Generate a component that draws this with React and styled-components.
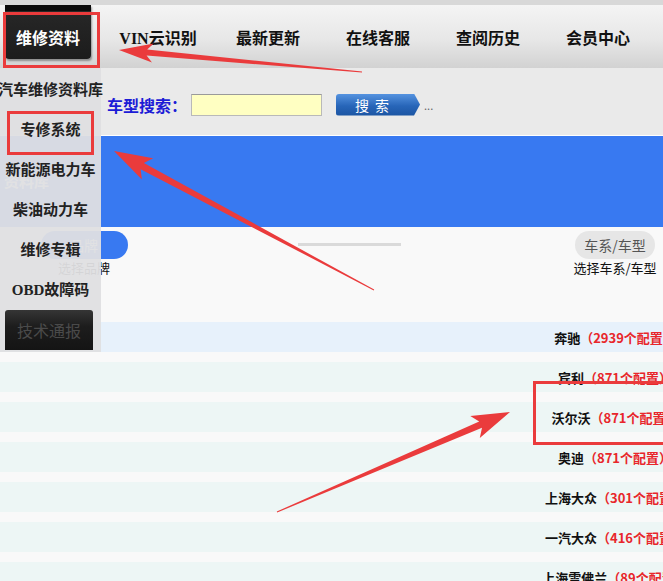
import styled, { createGlobalStyle } from "styled-components";

const GlobalStyle = createGlobalStyle`
  html, body {
    margin: 0;
    padding: 0;
    overflow: hidden;
    background: #fff;
  }
  body {
    font-family: "Noto Sans CJK SC", "Noto Sans", sans-serif;
  }
`;

const Page = styled.div`
  position: relative;
  width: 700px;
  height: 581px;
  overflow: hidden;
  background: #f9f9f9;
`;

const TopNav = styled.div`
  height: 63px;
  border-top: 5px solid #d8d8d8;
  background: linear-gradient(#f4f4f4, #e7e7e7 55%, #d2d2d2);
  display: flex;
  gap: 24px;
  padding-left: 5px;
`;

const NavTab = styled.a`
  width: 86px;
  height: 54px;
  padding-top: 10px;
  box-sizing: border-box;
  display: flex;
  align-items: center;
  justify-content: center;
  white-space: nowrap;
  font-family: "Liberation Serif", "Noto Sans CJK SC", serif;
  font-size: 16px;
  font-weight: 700;
  color: ${({ $active }) => ($active ? "#fff" : "#111")};
  background: ${({ $active }) =>
    $active
      ? "linear-gradient(#0b0b0b 0 6px, #272727 6px, #1c1c1c)"
      : "transparent"};
  border-radius: 0 0 4px 4px;
  box-shadow: ${({ $active }) =>
    $active ? "1px 2px 2px rgba(0,0,0,0.35)" : "none"};
  text-decoration: none;
`;

const SearchRow = styled.div`
  height: 68px;
  box-sizing: border-box;
  padding: 6px 0 0 107px;
  background: #eaeaea;
  border-bottom: 1px solid #fff;
  display: flex;
  align-items: center;
`;

const SearchLabel = styled.span`
  color: #1c1cd6;
  font-size: 16px;
  font-weight: 700;
  white-space: nowrap;
`;

const SearchInput = styled.div`
  width: 131px;
  height: 22px;
  box-sizing: border-box;
  margin-left: 4px;
  background: #ffffc2;
  border: 1px solid #b9b9b9;
  border-top-color: #9a9a9a;
`;

const SearchButton = styled.div`
  width: 84px;
  height: 22px;
  margin-left: 14px;
  display: flex;
  align-items: center;
  justify-content: center;
  padding-right: 6px;
  box-sizing: border-box;
  color: #fff;
  font-size: 14px;
  letter-spacing: 6px;
  background: linear-gradient(#5593e0, #2765b8 55%, #1c55a2);
  border-radius: 3px 0 0 3px;
  clip-path: polygon(0 0, calc(100% - 6px) 0, 100% 50%, calc(100% - 6px) 100%, 0 100%);
`;

const Ellipsis = styled.span`
  margin-left: 4px;
  font-size: 11px;
  color: #666;
`;

const BlueBand = styled.div`
  height: 91px;
  background: #3879f1;
  box-sizing: border-box;
  padding: 32px 0 0 4px;
`;

const BandTitle = styled.span`
  color: #fff;
  font-size: 15px;
  font-weight: 700;
`;

const StepArea = styled.div`
  height: 95px;
  display: grid;
  grid-template-columns: 168px 1fr 170px;
`;

const Step = styled.div`
  display: flex;
  flex-direction: column;
  align-items: center;
  padding-top: 4px;
`;

const StepPill = styled.div`
  width: ${({ $active }) => ($active ? "87px" : "80px")};
  height: 28px;
  border-radius: 14px;
  display: flex;
  align-items: center;
  justify-content: center;
  font-size: 14px;
  color: ${({ $active }) => ($active ? "#fff" : "#555")};
  background: ${({ $active }) => ($active ? "#3879f1" : "#e6e6e6")};
`;

const StepLabel = styled.div`
  margin-top: 0;
  line-height: 18px;
  font-size: 13px;
  color: #111;
`;

const Connector = styled.div`
  justify-self: center;
  width: 103px;
  height: 3px;
  margin-top: 16px;
  background: #dadada;
`;

const BrandList = styled.div`
  display: flex;
  flex-direction: column;
  gap: 10px;
`;

const BrandRow = styled.div`
  height: 30px;
  display: grid;
  grid-template-columns: 1fr 170px;
  background: ${({ $first }) => ($first ? "#e7f1fb" : "#edf6f5")};
`;

const BrandCell = styled.div`
  grid-column: 2;
  display: flex;
  justify-content: center;
  align-items: center;
  white-space: nowrap;
  font-size: 13px;
  font-weight: 700;
  color: #111;
`;

const Count = styled.span`
  color: #e8262b;
`;

const Dropdown = styled.div`
  position: absolute;
  top: 68px;
  left: 0;
  width: 101px;
  padding-bottom: 2px;
  background: rgba(223, 223, 225, 0.95);
  z-index: 2;
`;

const DropItem = styled.div`
  height: 40px;
  display: flex;
  align-items: center;
  justify-content: center;
  white-space: nowrap;
  font-family: "Liberation Serif", "Noto Sans CJK SC", serif;
  font-size: 15px;
  font-weight: 700;
  color: #222;
`;

const DarkButton = styled.div`
  margin: 2px 0 0 5px;
  width: 88px;
  height: 40px;
  display: flex;
  align-items: center;
  justify-content: center;
  font-size: 16px;
  color: #4a4a4a;
  border-radius: 3px 3px 0 0;
  background: linear-gradient(#353535, #1d1d1d 40%, #141414);
`;

const Marks = styled.svg`
  position: absolute;
  top: 0;
  left: 0;
  z-index: 3;
  pointer-events: none;
`;

const RED = "#ea3b3c";

const arrowPoints = (tx, ty, px, py, head, headW, shaft) => {
  const dx = px - tx;
  const dy = py - ty;
  const len = Math.hypot(dx, dy);
  const ux = dx / len;
  const uy = dy / len;
  const nx = -uy;
  const ny = ux;
  const bx = px - ux * head;
  const by = py - uy * head;
  const jx = bx + ux * 6;
  const jy = by + uy * 6;
  const pts = [
    [tx + nx * 0.5, ty + ny * 0.5],
    [jx + (nx * shaft) / 2, jy + (ny * shaft) / 2],
    [bx + (nx * headW) / 2, by + (ny * headW) / 2],
    [px, py],
    [bx - (nx * headW) / 2, by - (ny * headW) / 2],
    [jx - (nx * shaft) / 2, jy - (ny * shaft) / 2],
    [tx - nx * 0.5, ty - ny * 0.5],
  ];
  return pts.map((p) => p.map((v) => v.toFixed(1)).join(",")).join(" ");
};

const navItems = ["维修资料", "VIN云识别", "最新更新", "在线客服", "查阅历史", "会员中心"];
const dropItems = ["汽车维修资料库", "专修系统", "新能源电力车", "柴油动力车", "维修专辑", "OBD故障码"];
const brands = [
  ["奔驰", 2939],
  ["宾利", 871],
  ["沃尔沃", 871],
  ["奥迪", 871],
  ["上海大众", 301],
  ["一汽大众", 416],
  ["上海雪佛兰", 89],
];

export default function App() {
  return (
    <Page>
      <GlobalStyle />
      <TopNav>
        {navItems.map((t, i) => (
          <NavTab key={t} $active={i === 0}>
            {t}
          </NavTab>
        ))}
      </TopNav>

      <SearchRow>
        <SearchLabel>车型搜索：</SearchLabel>
        <SearchInput />
        <SearchButton>搜索</SearchButton>
        <Ellipsis>...</Ellipsis>
      </SearchRow>

      <BlueBand>
        <BandTitle>资料库</BandTitle>
      </BlueBand>

      <StepArea>
        <Step>
          <StepPill $active>品牌</StepPill>
          <StepLabel>选择品牌</StepLabel>
        </Step>
        <Connector />
        <Step>
          <StepPill>车系/车型</StepPill>
          <StepLabel>选择车系/车型</StepLabel>
        </Step>
      </StepArea>

      <BrandList>
        {brands.map(([name, n], i) => (
          <BrandRow key={name} $first={i === 0}>
            <BrandCell>
              {name}
              <Count>（{n}个配置）</Count>
            </BrandCell>
          </BrandRow>
        ))}
      </BrandList>

      <Dropdown>
        {dropItems.map((t) => (
          <DropItem key={t}>{t}</DropItem>
        ))}
        <DarkButton>技术通报</DarkButton>
      </Dropdown>

      <Marks width="700" height="581" viewBox="0 0 700 581">
        <g fill="none" stroke={RED} strokeWidth="3">
          <rect x="4.5" y="13.5" width="94" height="53" />
          <rect x="8.5" y="112.5" width="84" height="41" />
          <rect x="534.5" y="382.5" width="200" height="61" />
        </g>
        <g fill={RED}>
          <polygon points={arrowPoints(362, 72, 119, 50, 34, 19, 6)} />
          <polygon points={arrowPoints(374, 290, 114, 151, 38, 24, 7)} />
          <polygon points={arrowPoints(277, 512, 510, 412, 38, 24, 7)} />
        </g>
      </Marks>
    </Page>
  );
}
